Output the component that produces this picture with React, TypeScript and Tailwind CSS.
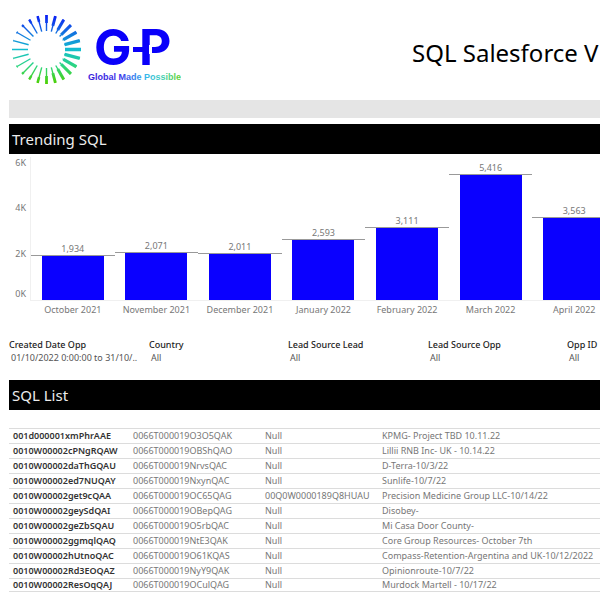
const months = [
  { name: "October 2021", value: 1934 },
  { name: "November 2021", value: 2071 },
  { name: "December 2021", value: 2011 },
  { name: "January 2022", value: 2593 },
  { name: "February 2022", value: 3111 },
  { name: "March 2022", value: 5416 },
  { name: "April 2022", value: 3563 },
];

const filters = [
  { name: "Created Date Opp", value: "01/10/2022 0:00:00 to 31/10/.." },
  { name: "Country", value: "All" },
  { name: "Lead Source Lead", value: "All" },
  { name: "Lead Source Opp", value: "All" },
  { name: "Opp ID", value: "All" },
];

const rows = [
  ["001d000001xmPhrAAE", "0066T000019O3O5QAK", "Null", "KPMG- Project TBD 10.11.22"],
  ["0010W00002cPNgRQAW", "0066T000019OBShQAO", "Null", "Lillii RNB Inc- UK - 10.14.22"],
  ["0010W00002daThGQAU", "0066T000019NrvsQAC", "Null", "D-Terra-10/3/22"],
  ["0010W00002ed7NUQAY", "0066T000019NxynQAC", "Null", "Sunlife-10/7/22"],
  ["0010W00002get9cQAA", "0066T000019OC65QAG", "00Q0W0000189Q8HUAU", "Precision Medicine Group LLC-10/14/22"],
  ["0010W00002geySdQAI", "0066T000019OBepQAG", "Null", "Disobey-"],
  ["0010W00002geZbSQAU", "0066T000019O5rbQAC", "Null", "Mi Casa Door County-"],
  ["0010W00002ggmqlQAQ", "0066T000019NtE3QAK", "Null", "Core Group Resources- October 7th"],
  ["0010W00002hUtnoQAC", "0066T000019O61KQAS", "Null", "Compass-Retention-Argentina and UK-10/12/2022"],
  ["0010W00002Rd3EOQAZ", "0066T000019NyY9QAK", "Null", "Opinionroute-10/7/22"],
  ["0010W00002ResOqQAJ", "0066T000019OCulQAG", "Null", "Murdock Martell - 10/17/22"],
];

const PLOT_HEIGHT = 140;
const AXIS_MAX = 6000;
const RAYS = 24;

function Logo() {
  return (
    <svg width="172" height="76" viewBox="0 0 172 76" role="img" aria-label="G-P Global Made Possible">
      <defs>
        <linearGradient id="burst" gradientUnits="userSpaceOnUse" x1="0" y1="3" x2="0" y2="72">
          <stop offset="0" stopColor="#0a1cf5" />
          <stop offset="0.2" stopColor="#1260e4" />
          <stop offset="0.5" stopColor="#12bdd0" />
          <stop offset="0.75" stopColor="#2dd67c" />
          <stop offset="1" stopColor="#4fd000" />
        </linearGradient>
        <linearGradient id="tag" gradientUnits="userSpaceOnUse" x1="79" y1="0" x2="170" y2="0">
          <stop offset="0" stopColor="#3a20d8" />
          <stop offset="0.35" stopColor="#3a35ea" />
          <stop offset="0.62" stopColor="#35b4ee" />
          <stop offset="0.8" stopColor="#45cfc0" />
          <stop offset="1" stopColor="#5fd23a" />
        </linearGradient>
      </defs>
      <g fill="none" stroke="url(#burst)">
        {Array.from({ length: RAYS }, (_, i) => {
          const a = (i * 2 * Math.PI) / RAYS;
          const c = Math.cos(a);
          const s = Math.sin(a);
          const wide = 34.5 - 16 * ((1 + c) / 2);
          const at = (r: number) => `${(37.5 + r * c + 0.01).toFixed(2)} ${(37.5 + r * s).toFixed(2)}`;
          const tip = `${(37.5 + 34.5 * c).toFixed(2)} ${(37.51 + 34.5 * s).toFixed(2)}`;
          return (
            <g key={i}>
              <path d={`M${at(18.5)}L${tip}`} strokeWidth="1.4" />
              {c > -0.98 && <path d={`M${at(wide)}L${tip}`} strokeWidth={2.7 + 0.6 * c} />}
            </g>
          );
        })}
      </g>
      <g fill="#0a00fa" fontFamily="Inter, sans-serif" fontWeight="700" fontSize="50">
        <text x="85" y="53">G</text>
        <text x="130" y="53">P</text>
        <rect x="124" y="35" width="12" height="5" />
      </g>
      <rect x="140" y="33" width="3" height="9" fill="#fff" />
      <text x="79" y="68" fill="url(#tag)" fontFamily="Liberation Sans, Arial, sans-serif" fontWeight="700" fontSize="9">
        Global Made Possible
      </text>
    </svg>
  );
}

function SectionTitle({ children }: { children: string }) {
  return <h2 className="flex h-[30px] items-center bg-black pl-[3px] text-[15px] text-[#ececec]">{children}</h2>;
}

function Chart() {
  return (
    <figure className="flex pt-[3px] text-[9px] text-[#777]" aria-label="Trending SQL by month">
      <div className="h-[144px] w-[22px] shrink-0 border-r border-[#f0f0f0] pr-1 text-right leading-3">
        <div className="h-[45px]">6K</div>
        <div className="h-[46px]">4K</div>
        <div className="h-10">2K</div>
        <div>0K</div>
      </div>
      <div className="grid w-[585px] shrink-0 grid-cols-7">
        {months.map((m) => (
          <div key={m.name} className="text-center">
            <div className="flex h-[144px] flex-col justify-end border-b border-[#f0f0f0]">
              <span className="leading-3">{m.value.toLocaleString("en-US")}</span>
              <div className="h-px shrink-0 bg-[#999]" />
              <div className="mx-auto w-[62px] shrink-0 bg-[#0a00ff]" style={{ height: Math.round((m.value / AXIS_MAX) * PLOT_HEIGHT) - 1 }} />
            </div>
            <div className="pt-[2px] leading-[14px]">{m.name}</div>
          </div>
        ))}
      </div>
    </figure>
  );
}

export default function App() {
  return (
    <main className="min-h-screen overflow-hidden bg-white pb-2 pl-[9px] font-['Noto_Sans','Open_Sans',sans-serif]">
      <header className="flex h-[100px] items-start pt-3">
        <Logo />
        <h1 className="ml-[231px] pt-[23px] text-2xl leading-9 whitespace-nowrap text-black">SQL Salesforce V</h1>
      </header>
      <div className="mb-1.5 h-[18px] bg-[#e5e5e5]" />
      <section>
        <SectionTitle>Trending SQL</SectionTitle>
        <Chart />
      </section>
      <dl className="mt-[21px] flex text-[9px] leading-[13px]">
        {filters.map((f) => (
          <div key={f.name} className="w-[139px] shrink-0 whitespace-nowrap odd:w-[140px]">
            <dt className="font-medium text-[#222]">{f.name}</dt>
            <dd className="pl-[2px] text-[#555]">{f.value}</dd>
          </div>
        ))}
      </dl>
      <section className="mt-4">
        <SectionTitle>SQL List</SectionTitle>
        <table className="mt-[18px] w-full table-fixed border-collapse text-left text-[9px] leading-[14px] text-[#777]">
          <colgroup>
            <col className="w-[124px]" />
            <col className="w-[132px]" />
            <col className="w-[117px]" />
            <col />
          </colgroup>
          <tbody>
            {rows.map((r) => (
              <tr key={r[0]} className="border-y border-[#dcdcdc] last:leading-3">
                <th scope="row" className="pl-1 font-semibold whitespace-nowrap text-[#333]">{r[0]}</th>
                <td className="whitespace-nowrap">{r[1]}</td>
                <td className="whitespace-nowrap">{r[2]}</td>
                <td className="whitespace-nowrap">{r[3]}</td>
              </tr>
            ))}
          </tbody>
        </table>
      </section>
    </main>
  );
}
